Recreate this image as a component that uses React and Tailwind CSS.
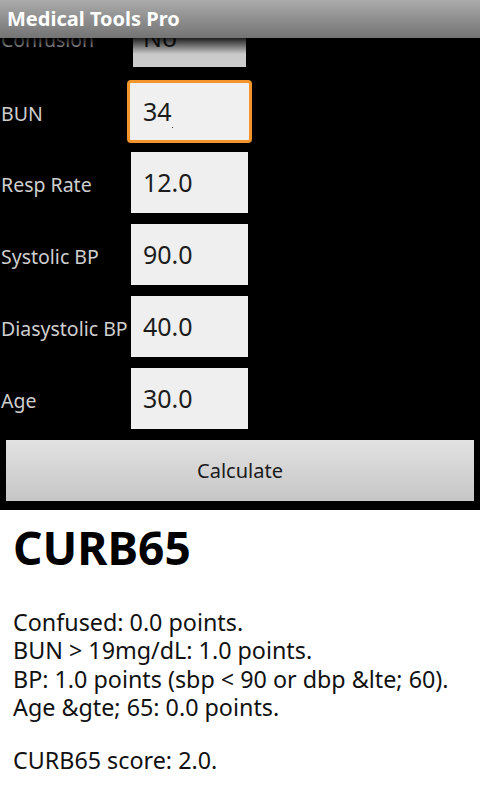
export default function App() {
  const rows = [
    { label: "BUN", value: "34", focused: true },
    { label: "Resp Rate", value: "12.0" },
    { label: "Systolic BP", value: "90.0" },
    { label: "Diasystolic BP", value: "40.0" },
    { label: "Age", value: "30.0" },
  ];
  return (
    <div className="w-[480px] h-[800px] bg-black flex flex-col overflow-hidden font-['Noto_Sans',sans-serif]">
      <div className="relative z-10 h-[38px] shrink-0 bg-linear-to-b from-[#ababab] to-[#747474] flex items-center pl-[7px]">
        <span className="text-white font-bold text-[20px] leading-none">Medical Tools Pro</span>
        <div className="absolute left-0 right-0 top-full h-[16px] bg-linear-to-b from-black/85 to-transparent" />
      </div>
      <div className="overflow-hidden flex flex-col shrink-0">
        <div className="-mt-[30px] flex flex-col gap-[11px]">
          <div className="flex items-baseline h-[61px]">
            <div className="w-[127px] pl-[1px] text-[19.5px] text-[#cfcfcf]">Confusion</div>
            <div className="w-[125px] h-[59px] px-[6px]">
              <div className="relative h-full flex items-center pl-[10px] bg-linear-to-b from-[#bdbdbd] to-[#cdcdcd] text-[25px] text-[#1c1c1c]">
                No
                <svg className="absolute left-[76px] top-[33%]" width="14" height="9" viewBox="0 0 14 9">
                  <path d="M0 0 L14 0 L7 8 Z" fill="#2a2a2a" />
                </svg>
              </div>
            </div>
          </div>
          {rows.map((r) => (
            <div key={r.label} className="flex items-baseline h-[61px]">
              <div className="w-[127px] pl-[1px] text-[19.5px] text-[#cfcfcf] whitespace-nowrap">{r.label}</div>
              {r.focused ? (
                <div className="relative w-[125px] h-[63px] rounded-[4px] border-[3px] border-[#f3952a] bg-[#f0f0f0] flex items-center pl-[13px] text-[25px] text-[#1c1c1c]">
                  {r.value}
                  <span className="absolute left-[42px] top-[44px] w-[1px] h-[1px] bg-[#333]" />
                </div>
              ) : (
                <div className="w-[125px] h-[61px] px-[4px] flex">
                  <div className="w-full h-full bg-[#efefef] flex items-center pl-[12px] text-[25px] text-[#1c1c1c]">
                    {r.value}
                  </div>
                </div>
              )}
            </div>
          ))}
        </div>
        <div className="mt-[11px] mx-[6px] h-[61px] bg-linear-to-b from-[#e2e2e2] to-[#c6c6c6] flex items-center justify-center text-[20px] text-[#1a1a1a]">
          Calculate
        </div>
        <div className="h-[9px]" />
      </div>
      <div className="flex-1 bg-white px-[13px] text-black">
        <div className="pt-[10px] text-[46px] leading-[54px] font-bold">CURB65</div>
        <div className="mt-[34px] text-[23.3px] leading-[28.4px] text-[#111]">
          <div>Confused: 0.0 points.</div>
          <div>BUN &gt; 19mg/dL: 1.0 points.</div>
          <div>BP: 1.0 points (sbp &lt; 90 or dbp &amp;lte; 60).</div>
          <div>Age &amp;gte; 65: 0.0 points.</div>
        </div>
        <div className="mt-[24px] text-[23.3px] leading-[28.4px] text-[#111]">CURB65 score: 2.0.</div>
      </div>
    </div>
  );
}
